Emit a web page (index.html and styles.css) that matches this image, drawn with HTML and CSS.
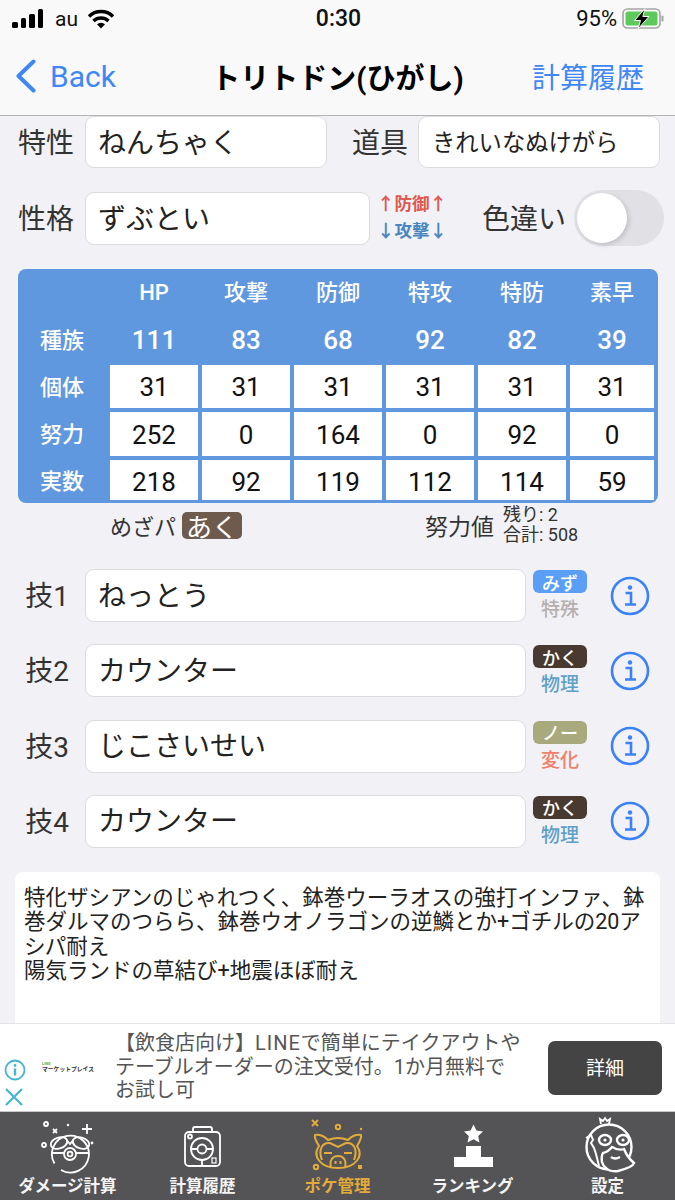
FILE: index.html
```html
<!DOCTYPE html>
<html lang="ja">
<head>
    <meta charset="UTF-8">
    <meta name="viewport" content="width=device-width, initial-scale=1.0">
    <title>トリトドン(ひがし)</title>
    <link rel="stylesheet" href="styles.css">
</head>
<body>
<div class="app">
    <header class="header">
        <div class="status-bar">
            <div class="status-side">
                <div class="signal"><i class="b1"></i><i class="b2"></i><i class="b3"></i><i class="b4"></i></div>
                <span class="carrier">au</span>
                <svg class="wifi" width="28" height="20" viewBox="0 0 28 20">
                    <path d="M2 7.5a17 17 0 0 1 24 0M6.5 12a11 11 0 0 1 15 0" fill="none" stroke="#000" stroke-width="3.4"/>
                    <path d="M10 15.2a6 6 0 0 1 8 0L14 19.5z" fill="#000"/>
                </svg>
            </div>
            <div class="clock">0:30</div>
            <div class="status-side status-right">
                <span class="battery-text">95%</span>
                <svg width="43" height="22" viewBox="0 0 43 22">
                    <rect x="1" y="1" width="37" height="19" rx="4.5" fill="none" stroke="#a4a4a4" stroke-width="1.6"/>
                    <rect x="3.5" y="3.5" width="32" height="14" rx="2.5" fill="#5fca5c"/>
                    <rect x="39.5" y="7.5" width="2" height="6" rx="1" fill="#a4a4a4"/>
                    <path d="M23 .5 12.5 12.5h6L16 21 27 8.5h-6.2z" fill="#000" stroke="#f9f9fa" stroke-width="1"/>
                </svg>
            </div>
        </div>
        <nav class="nav-bar">
            <div class="nav-side">
                <svg class="back-icon" width="22" height="34" viewBox="0 0 22 34"><path d="M18.5 2.5 3.5 17l15 14.5" fill="none" stroke="#3f87f5" stroke-width="4" stroke-linecap="round" stroke-linejoin="round"/></svg>
                <span class="back-text">Back</span>
            </div>
            <div class="nav-title">トリトドン(ひがし)</div>
            <div class="nav-side nav-right">計算履歴</div>
        </nav>
    </header>

    <main class="content">
        <div class="form-row first-row">
            <div class="label">特性</div>
            <div class="field ability">ねんちゃく</div>
            <div class="label item-label">道具</div>
            <div class="field item">きれいなぬけがら</div>
        </div>

        <div class="form-row nature-row">
            <div class="label">性格</div>
            <div class="field nature">ずぶとい</div>
            <div class="nature-effect">
                <div class="up">↑防御↑</div>
                <div class="down">↓攻撃↓</div>
            </div>
            <div class="label shiny-label">色違い</div>
            <div class="toggle"><div class="thumb"></div></div>
        </div>

        <div class="stats">
            <div></div><div class="head">HP</div><div class="head">攻撃</div><div class="head">防御</div><div class="head">特攻</div><div class="head">特防</div><div class="head">素早</div>
            <div class="head">種族</div><div class="head base">111</div><div class="head base">83</div><div class="head base">68</div><div class="head base">92</div><div class="head base">82</div><div class="head base">39</div>
            <div class="head">個体</div><div class="cell">31</div><div class="cell">31</div><div class="cell">31</div><div class="cell">31</div><div class="cell">31</div><div class="cell">31</div>
            <div class="head">努力</div><div class="cell">252</div><div class="cell">0</div><div class="cell">164</div><div class="cell">0</div><div class="cell">92</div><div class="cell">0</div>
            <div class="head">実数</div><div class="cell">218</div><div class="cell">92</div><div class="cell">119</div><div class="cell">112</div><div class="cell">114</div><div class="cell">59</div>
        </div>

        <div class="stats-footer">
            <span class="hidden-power">めざパ</span>
            <span class="chip-dark">あく</span>
            <span class="ev-label">努力値</span>
            <div class="ev-detail">
                <div>残り: 2</div>
                <div>合計: 508</div>
            </div>
        </div>

        <div class="moves">
            <div class="move">
                <div class="move-label">技1</div>
                <div class="field move-name">ねっとう</div>
                <div class="move-type">
                    <div class="type-chip water">みず</div>
                    <div class="category special">特殊</div>
                </div>
                <svg class="info" width="40" height="40" viewBox="0 0 40 40"><circle cx="20" cy="20" r="18" fill="none" stroke="#3b82f6" stroke-width="2.6"/><circle cx="20" cy="11.5" r="2.2" fill="#3b82f6"/><path d="M15.5 17H21v11.5M15 28.5h11" fill="none" stroke="#3b82f6" stroke-width="2.6"/></svg>
            </div>
            <div class="move">
                <div class="move-label">技2</div>
                <div class="field move-name">カウンター</div>
                <div class="move-type">
                    <div class="type-chip fighting">かく</div>
                    <div class="category physical">物理</div>
                </div>
                <svg class="info" width="40" height="40" viewBox="0 0 40 40"><circle cx="20" cy="20" r="18" fill="none" stroke="#3b82f6" stroke-width="2.6"/><circle cx="20" cy="11.5" r="2.2" fill="#3b82f6"/><path d="M15.5 17H21v11.5M15 28.5h11" fill="none" stroke="#3b82f6" stroke-width="2.6"/></svg>
            </div>
            <div class="move">
                <div class="move-label">技3</div>
                <div class="field move-name">じこさいせい</div>
                <div class="move-type">
                    <div class="type-chip normal">ノー</div>
                    <div class="category status">変化</div>
                </div>
                <svg class="info" width="40" height="40" viewBox="0 0 40 40"><circle cx="20" cy="20" r="18" fill="none" stroke="#3b82f6" stroke-width="2.6"/><circle cx="20" cy="11.5" r="2.2" fill="#3b82f6"/><path d="M15.5 17H21v11.5M15 28.5h11" fill="none" stroke="#3b82f6" stroke-width="2.6"/></svg>
            </div>
            <div class="move">
                <div class="move-label">技4</div>
                <div class="field move-name">カウンター</div>
                <div class="move-type">
                    <div class="type-chip fighting">かく</div>
                    <div class="category physical">物理</div>
                </div>
                <svg class="info" width="40" height="40" viewBox="0 0 40 40"><circle cx="20" cy="20" r="18" fill="none" stroke="#3b82f6" stroke-width="2.6"/><circle cx="20" cy="11.5" r="2.2" fill="#3b82f6"/><path d="M15.5 17H21v11.5M15 28.5h11" fill="none" stroke="#3b82f6" stroke-width="2.6"/></svg>
            </div>
        </div>

        <div class="note">特化ザシアンのじゃれつく、鉢巻ウーラオスの強打インファ、鉢<br>巻ダルマのつらら、鉢巻ウオノラゴンの逆鱗とか+ゴチルの20ア<br>シパ耐え<br>陽気ランドの草結び+地震ほぼ耐え</div>
    </main>

    <aside class="ad">
        <div class="ad-icons">
            <svg width="22" height="22" viewBox="0 0 22 22"><circle cx="11" cy="11" r="9.5" fill="none" stroke="#45b4d4" stroke-width="1.8"/><circle cx="11" cy="6.5" r="1.4" fill="#45b4d4"/><path d="M11 9.5v7" stroke="#45b4d4" stroke-width="2.4"/></svg>
            <svg width="20" height="20" viewBox="0 0 20 20"><path d="M2 2l16 16M18 2 2 18" stroke="#45b4d4" stroke-width="2.2"/></svg>
        </div>
        <div class="ad-logo">
            <div class="ad-logo-line">LINE</div>
            <div>マーケットプレイス</div>
        </div>
        <div class="ad-text">【飲食店向け】<span class="ad-latin">LINE</span>で簡単にテイクアウトや<br>テーブルオーダーの注文受付。1か月無料で<br>お試し可</div>
        <div class="ad-button">詳細</div>
    </aside>

    <footer class="tab-bar">
        <div class="tab">
            <svg width="80" height="58" viewBox="0 0 80 58" fill="none" stroke="#fff" stroke-width="1.8">
                <path d="M33 54A18.500 18.500 0 1 0 26.500 47.500"/>
                <ellipse cx="31" cy="27" rx="8.500" ry="5.500" transform="rotate(-18 31 27)"/>
                <ellipse cx="53" cy="27" rx="8.500" ry="5.500" transform="rotate(18 53 27)"/>
                <path d="M23.500 37H36M48 37h12.500M38 29l1.500-4 2.500 3 2.500-3 1.500 4"/>
                <circle cx="42" cy="38" r="6"/><circle cx="42" cy="38" r="2.400"/>
                <circle cx="18" cy="8" r="2"/><circle cx="16" cy="29" r="2"/>
                <path d="M25 13l4 4M29 13l-4 4M59 8v10M54 13h10"/>
                <circle cx="40" cy="9" r="1.200" fill="#fff" stroke="none"/><circle cx="64" cy="27" r="1.400" fill="#fff" stroke="none"/>
            </svg>
            <div class="tab-label">ダメージ計算</div>
        </div>
        <div class="tab">
            <svg width="80" height="58" viewBox="0 0 80 58" fill="none" stroke="#fff" stroke-width="1.8">
                <rect x="22" y="16" width="35" height="34" rx="4"/>
                <path d="M30 16v-3q0-2 2-2h15q2 0 2 2v3"/>
                <circle cx="39" cy="33" r="11"/><circle cx="39" cy="33" r="4.500"/>
                <path d="M39 44v6M28 33h6.500M43.500 33H50"/>
                <circle cx="27" cy="20.500" r="2"/>
                <rect x="49" y="42" width="4" height="5" stroke-width="1.200"/>
            </svg>
            <div class="tab-label">計算履歴</div>
        </div>
        <div class="tab tab-active">
            <svg width="80" height="58" viewBox="0 0 80 58" fill="none" stroke="#e3ab3a" stroke-width="2">
                <path d="M21 30Q16 22 17 19 24 18 30 24 40 20 50 24 56 18 63 19 64 22 59 30C66 40 58 52 40 52 22 52 14 40 21 30z"/>
                <path d="M24 44C20 34 24 26 32 27L40 31 48 27C56 26 60 34 56 44"/>
                <path d="M26 37h8M46 37h8"/>
                <path d="M33 51C31 44 35 40 40 40 45 40 49 44 47 51"/>
                <path d="M37.500 45v3M42.500 45v3"/>
                <path d="M14 4l6 6M20 4l-6 6"/>
                <circle cx="40" cy="11" r="2.200"/><circle cx="18" cy="51" r="2.200"/>
                <circle cx="63" cy="13" r="1.200" fill="#e3ab3a" stroke="none"/>
                <rect x="60" y="49" width="4" height="4" fill="#e3ab3a" stroke="none"/>
            </svg>
            <div class="tab-label">ポケ管理</div>
        </div>
        <div class="tab">
            <svg width="80" height="58" viewBox="0 0 80 58" fill="#fff">
                <path d="M40.500 8.500l2.900 6 6.600.9-4.800 4.500 1.200 6.500-5.900-3.200-5.900 3.200 1.200-6.500-4.800-4.500 6.600-.9z"/>
                <path d="M33 30h15v11h12v10H21V41h12z"/>
            </svg>
            <div class="tab-label">ランキング</div>
        </div>
        <div class="tab">
            <svg width="80" height="58" viewBox="0 0 80 58" fill="none" stroke="#fff" stroke-width="2.400">
                <circle cx="41" cy="31" r="22.500"/>
                <path d="M33 8l-1-5 3 2 2-3 2 3 3-2-1 5" stroke-width="1.800"/>
                <path d="M18 22l5-3 2 5-2 3 3 5 2 6 3 12" stroke-width="2"/>
                <ellipse cx="37" cy="24" rx="6" ry="5"/><ellipse cx="55" cy="24" rx="6" ry="5"/>
                <circle cx="37" cy="24" r="1.600" fill="#fff" stroke="none"/><circle cx="55" cy="24" r="1.600" fill="#fff" stroke="none"/>
                <path d="M34 46q-1-6 1-9 5-1 9-6 7 4 12 2 3 8 10 14-1 4-16 8-8 1-12-3-3-2-4-6z" fill="#545456"/>
                <path d="M43 41q4 3 9 0"/>
            </svg>
            <div class="tab-label">設定</div>
        </div>
    </footer>
</div>
</body>
</html>
```

FILE: styles.css
```css
body {
    margin: 0;
    font-family: Roboto, "Noto Sans CJK JP", sans-serif;
    color: #222;
}

.app {
    width: 675px;
    height: 1200px;
    display: flex;
    flex-direction: column;
    overflow: hidden;
    background-color: #f1f1f6;
}

/* header */
.header {
    height: 116px;
    box-sizing: border-box;
    flex-shrink: 0;
    background-color: #f9f9fa;
    border-bottom: 1px solid #b4b4b4;
}

.status-bar {
    height: 37px;
    display: flex;
    align-items: center;
    padding: 0 10px 0 12px;
}

.status-side {
    flex: 1;
    display: flex;
    align-items: center;
}

.status-right {
    justify-content: flex-end;
}

.signal {
    display: flex;
    align-items: flex-end;
    gap: 3px;
    height: 19px;
}

.signal i {
    width: 5.500px;
    border-radius: 1.500px;
    background-color: #000;
}

.signal .b1 { height: 6px; }
.signal .b2 { height: 10px; }
.signal .b3 { height: 14px; }
.signal .b4 { height: 19px; }

.carrier {
    margin-left: 12px;
    font-size: 21px;
    color: #111;
}

.wifi {
    margin-left: 9px;
}

.clock {
    font-size: 23px;
    font-weight: 500;
    color: #111;
}

.battery-text {
    font-size: 22px;
    margin-right: 5px;
    color: #111;
}

.nav-bar {
    height: 78px;
    display: flex;
    align-items: center;
    padding: 0 31px 2px;
}

.nav-side {
    flex: 1;
    display: flex;
    align-items: center;
    color: #3f87f5;
    font-size: 28px;
}

.nav-right {
    justify-content: flex-end;
}

.back-icon {
    margin-left: -16px;
}

.back-text {
    margin-left: 13px;
    font-size: 30px;
}

.nav-title {
    font-size: 29px;
    font-weight: 700;
    color: #000;
    white-space: nowrap;
}

/* form */
.content {
    flex: 1;
    min-height: 0;
    overflow: hidden;
}

.form-row {
    display: flex;
    align-items: center;
    padding-left: 18px;
}

.first-row {
    height: 52px;
}

.nature-row {
    height: 56px;
    margin-top: 22px;
}

.label {
    width: 56px;
    margin-top: 4px;
    margin-right: 11px;
    font-size: 28px;
    line-height: 40px;
    color: #333;
    white-space: nowrap;
}

.field {
    box-sizing: border-box;
    display: flex;
    align-items: center;
    padding: 0 0 2px 12px;
    background-color: #fff;
    border: 1px solid #dcdcdf;
    border-radius: 9px;
    font-size: 28px;
    color: #222;
    white-space: nowrap;
}

.ability {
    width: 242px;
    height: 52px;
}

.item-label {
    margin-left: 25px;
    margin-right: 10px;
}

.item {
    width: 242px;
    height: 52px;
    padding-left: 13px;
    font-size: 23.300px;
}

.nature {
    width: 285px;
    height: 53px;
}

.nature-effect {
    width: 66px;
    margin-left: 7px;
    font-size: 17.500px;
    font-weight: 700;
    line-height: 27px;
    white-space: nowrap;
}

.up {
    color: #dd5a4e;
}

.down {
    color: #4a86bf;
}

.shiny-label {
    width: 84px;
    margin-left: 39px;
    margin-right: 8px;
}

.toggle {
    box-sizing: border-box;
    width: 90px;
    height: 56px;
    padding: 3px;
    border-radius: 28px;
    background-color: #e0e0e5;
}

.thumb {
    width: 50px;
    height: 50px;
    border-radius: 50%;
    background-color: #fff;
    box-shadow: 2px 2px 5px rgba(0, 0, 0, 0.14);
}

/* stats table */
.stats {
    box-sizing: border-box;
    display: grid;
    grid-template-columns: repeat(6, 88px) 84px;
    grid-template-rows: 45px 43px 43px 44px 40px;
    gap: 4px;
    width: 640px;
    margin: 23px 0 0 18px;
    padding-bottom: 3px;
    border-radius: 8px;
    background-color: #6098e0;
}

.head {
    display: flex;
    align-items: center;
    justify-content: center;
    padding-top: 2px;
    font-size: 22px;
    font-weight: 500;
    line-height: 30px;
    color: #fff;
}

.head.base {
    padding-top: 0;
    font-size: 26px;
}

.cell {
    display: flex;
    align-items: center;
    justify-content: center;
    padding-top: 1px;
    font-size: 26px;
    color: #111;
    background-color: #fff;
}

/* the last row is shorter but its digits sit low in the cell */
.stats > :nth-last-child(-n+7) {
    padding-top: 4px;
}

.stats-footer {
    box-sizing: border-box;
    height: 46px;
    display: flex;
    align-items: center;
    padding: 0 0 2px 110px;
    color: #333;
}

.hidden-power {
    font-size: 22px;
}

.chip-dark {
    width: 60px;
    height: 27px;
    margin-left: 6px;
    display: flex;
    align-items: center;
    justify-content: center;
    border-radius: 5px;
    background-color: #6e5b4d;
    color: #fff;
    font-size: 26px;
}

.ev-label {
    margin-left: 183px;
    font-size: 23px;
}

.ev-detail {
    margin-left: 9px;
    font-size: 18px;
    line-height: 20px;
    white-space: nowrap;
}

/* moves */
.moves {
    display: flex;
    flex-direction: column;
    gap: 22.330px;
    margin-top: 20px;
}

.move {
    display: flex;
    align-items: center;
    height: 53px;
}

.move-label {
    width: 76px;
    margin: 0 0 3px 9px;
    text-align: center;
    font-size: 28px;
    color: #333;
}

.move-name {
    width: 441px;
    height: 53px;
    padding-bottom: 4px;
}

.move-type {
    align-self: flex-start;
    width: 54px;
    margin: 1px 0 0 7px;
    text-align: center;
}

.type-chip {
    height: 23px;
    display: flex;
    align-items: center;
    justify-content: center;
    border-radius: 6px;
    color: #fff;
    font-size: 18px;
    font-weight: 500;
}

.water { background-color: #5a9ff5; }
.fighting { background-color: #483a30; }
.normal { background-color: #a9a97e; }

.category {
    margin-top: 3px;
    font-size: 19px;
    font-weight: 500;
    line-height: 27px;
}

.special { color: #b5b0ae; }
.physical { color: #5fa0c8; }
.status { color: #f07f68; }

.info {
    margin-left: 23px;
}

/* free memo */
.note {
    box-sizing: border-box;
    width: 645px;
    height: 200px;
    margin: 24px 0 0 15px;
    padding: 14px 9px;
    background-color: #fff;
    border-radius: 8px;
    font-size: 21.500px;
    line-height: 24.500px;
    color: #222;
    white-space: nowrap;
}

/* ad */
.ad {
    box-sizing: border-box;
    height: 89px;
    flex-shrink: 0;
    display: flex;
    align-items: center;
    background-color: #fff;
    border-top: 1px solid #e4e4e6;
    border-bottom: 1px solid #c8c8c8;
}

.ad-icons {
    width: 30px;
    height: 100%;
    padding-left: 4px;
    box-sizing: border-box;
    display: flex;
    flex-direction: column;
    justify-content: flex-end;
    gap: 6px;
    padding-bottom: 4px;
}

.ad-logo {
    width: 55px;
    margin-left: 12px;
    font-size: 5.800px;
    font-weight: 700;
    line-height: 7px;
    color: #333;
    white-space: nowrap;
}

.ad-logo-line {
    font-size: 4px;
    line-height: 4px;
    color: #4caf50;
}

.ad-text {
    width: 433px;
    margin-left: 18px;
    font-size: 20px;
    line-height: 23.500px;
    color: #555;
    white-space: nowrap;
}

.ad-latin {
    letter-spacing: 1px;
}

.ad-button {
    width: 114px;
    height: 54px;
    padding-bottom: 3px;
    box-sizing: border-box;
    display: flex;
    align-items: center;
    justify-content: center;
    border-radius: 7px;
    background-color: #444;
    color: #fff;
    font-size: 19px;
}

/* tabs */
.tab-bar {
    height: 88px;
    flex-shrink: 0;
    display: grid;
    grid-template-columns: repeat(5, 135px);
    background-color: #545456;
}

.tab {
    display: flex;
    flex-direction: column;
    align-items: center;
    padding-top: 4px;
}

.tab svg {
    flex-shrink: 0;
}

.tab-label {
    margin-top: 2px;
    font-size: 16.500px;
    font-weight: 700;
    line-height: 22px;
    color: #f4f4f4;
    white-space: nowrap;
}

.tab-active .tab-label {
    color: #e3ab3a;
}
```
